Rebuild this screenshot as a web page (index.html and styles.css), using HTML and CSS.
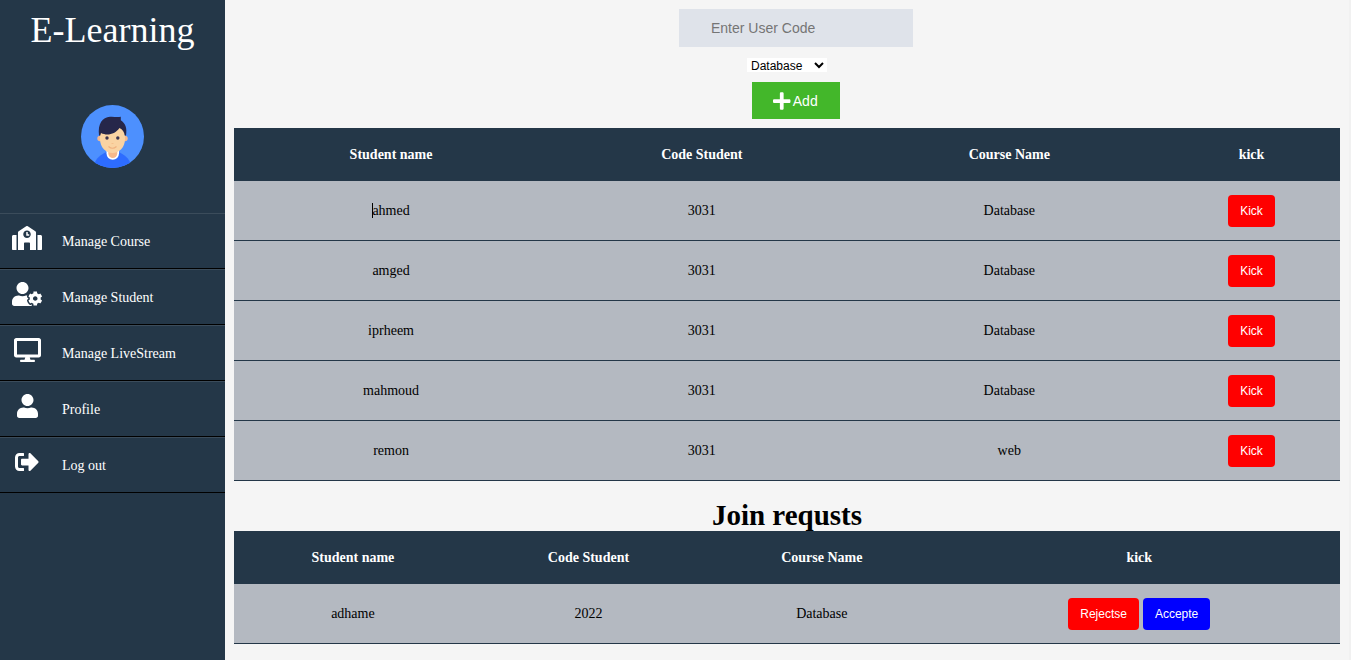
FILE: index.html
```html
<!DOCTYPE html>
<html lang="en">
<head>
<meta charset="utf-8">
<title>E-Learning</title>
<link rel="stylesheet" href="styles.css">
</head>
<body>
<aside class="sidebar">
  <h1 class="brand">E-Learning</h1>
  <svg class="avatar" viewBox="0 0 63 63" role="img" aria-label="User avatar">
    <defs><clipPath id="disc"><circle cx="31.5" cy="31.5" r="31.5"/></clipPath></defs>
    <g clip-path="url(#disc)">
      <rect width="63" height="63" fill="#4d90fe"/>
      <path d="M13 60C15 53 20 49 26 47H37C43 49 48 53 50 60V63H13Z" fill="#2d6cff"/>
      <path d="M25.500 46V48.500a6.250 6.250 0 0 0 12.500 0V46Z" fill="#fff"/>
      <path d="M27.300 43H36.300V48.500a4.500 4.500 0 0 1-9 0Z" fill="#f7b98b"/>
      <circle cx="19" cy="33.500" r="2.700" fill="#f7b98b"/>
      <circle cx="44" cy="33.500" r="2.700" fill="#f7b98b"/>
      <path d="M19 24C19 18 44 18 44 24V34C44 42.500 38 48 31.500 48S19 42.500 19 34Z" fill="#fad3a2"/>
      <path d="M18 30.500C16.500 18.500 21.500 12.300 29 11.800C33 11.500 36 12.500 39.800 11.700V15.200C44.500 18.500 46.300 23 45 30.500H43.700C43.300 27 41.500 24.500 38.500 23C34 29.500 26 31 20 28L19.300 30.500Z" fill="#26264a"/>
      <circle cx="26" cy="33" r="1.700" fill="#3b3350"/>
      <circle cx="36.800" cy="33" r="1.700" fill="#3b3350"/>
      <path d="M30.500 38.500H32.500" stroke="#f5c08c" stroke-width="1"/>
      <path d="M27.500 41.500Q31.500 45 35.500 41.500" fill="none" stroke="#efb07f" stroke-width="1.200"/>
    </g>
  </svg>
  <nav class="menu">
    <a class="menu-item" href="#"><span class="menu-icon"><svg class="icon" viewBox="0 0 640 512"><path d="M0 224v272c0 8.840 7.160 16 16 16h80V192H32c-17.670 0-32 14.330-32 32zm360-48h-24v-40c0-4.420-3.580-8-8-8h-16c-4.420 0-8 3.580-8 8v64c0 4.420 3.580 8 8 8h48c4.420 0 8-3.580 8-8v-16c0-4.420-3.580-8-8-8zm137.750-63.960l-160-106.670a32.020 32.020 0 0 0-35.500 0l-160 106.670A32.002 32.002 0 0 0 128 138.660V512h128V368c0-8.840 7.160-16 16-16h96c8.840 0 16 7.160 16 16v144h128V138.670c0-10.700-5.350-20.700-14.250-26.630zM320 256c-44.180 0-80-35.820-80-80s35.820-80 80-80 80 35.820 80 80-35.820 80-80 80zm288-64h-64v320h80c8.840 0 16-7.160 16-16V224c0-17.670-14.330-32-32-32z"/></svg></span>Manage Course</a>
    <a class="menu-item" href="#"><span class="menu-icon"><svg class="icon" viewBox="0 0 640 512"><path d="M610.5 373.3c2.6-14.1 2.6-28.5 0-42.6l25.8-14.9c3-1.7 4.3-5.2 3.3-8.5-6.700-21.600-18.200-41.200-33.200-57.400-2.300-2.500-6-3.100-9-1.400l-25.800 14.900c-10.900-9.300-23.400-16.500-36.900-21.300v-29.800c0-3.400-2.400-6.400-5.700-7.100-22.300-5-45-4.800-66.200 0-3.300.7-5.700 3.700-5.700 7.100v29.800c-13.500 4.800-26 12-36.900 21.300l-25.800-14.900c-2.900-1.700-6.700-1.100-9 1.400-15 16.200-26.500 35.800-33.200 57.400-1 3.300.4 6.800 3.300 8.500l25.800 14.900c-2.600 14.100-2.600 28.500 0 42.600l-25.800 14.900c-3 1.700-4.300 5.200-3.300 8.500 6.700 21.600 18.200 41.100 33.200 57.400 2.300 2.500 6 3.100 9 1.400l25.800-14.900c10.900 9.300 23.400 16.500 36.900 21.300v29.800c0 3.400 2.400 6.400 5.700 7.100 22.300 5 45 4.800 66.200 0 3.300-.7 5.700-3.700 5.700-7.100v-29.800c13.500-4.800 26-12 36.900-21.300l25.800 14.900c2.900 1.700 6.700 1.100 9-1.400 15-16.200 26.500-35.800 33.200-57.400 1-3.300-.4-6.800-3.300-8.500l-25.800-14.900zM496 400.500c-26.800 0-48.500-21.800-48.500-48.500s21.800-48.500 48.500-48.500 48.500 21.800 48.500 48.500-21.700 48.500-48.500 48.500zM224 256c70.700 0 128-57.300 128-128S294.700 0 224 0 96 57.300 96 128s57.300 128 128 128zm201.200 226.500c-2.300-1.200-4.600-2.600-6.800-3.900l-7.900 4.600c-6 3.400-12.800 5.300-19.600 5.300-10.900 0-21.400-4.600-28.900-12.600-18.300-19.800-32.300-43.900-40.200-69.600-5.500-17.700 1.900-36.400 17.900-45.700l7.900-4.600c-.1-2.600-.1-5.200 0-7.800l-7.900-4.600c-16-9.200-23.400-28-17.900-45.700.9-2.900 2.200-5.800 3.200-8.700-3.800-.3-7.500-1.200-11.400-1.200h-16.700c-22.200 10.200-46.900 16-72.900 16s-50.600-5.800-72.900-16h-16.700C60.200 288 0 348.200 0 422.400V464c0 26.500 21.500 48 48 48h352c10.100 0 19.500-3.200 27.200-8.500-1.200-3.800-2-7.700-2-11.800v-9.200z"/></svg></span>Manage Student</a>
    <a class="menu-item" href="#"><span class="menu-icon"><svg class="icon" viewBox="0 0 576 512"><path d="M528 0H48C21.500 0 0 21.500 0 48v320c0 26.500 21.500 48 48 48h192l-16 48h-72c-13.300 0-24 10.700-24 24s10.700 24 24 24h272c13.300 0 24-10.700 24-24s-10.700-24-24-24h-72l-16-48h192c26.500 0 48-21.500 48-48V48c0-26.500-21.500-48-48-48zm-16 352H64V64h448v288z"/></svg></span>Manage LiveStream</a>
    <a class="menu-item" href="#"><span class="menu-icon"><svg class="icon" viewBox="0 0 448 512"><path d="M224 256c70.700 0 128-57.300 128-128S294.700 0 224 0 96 57.300 96 128s57.300 128 128 128zm89.600 32h-16.700c-22.200 10.200-46.900 16-72.900 16s-50.600-5.800-72.900-16h-16.700C60.200 288 0 348.200 0 422.400V464c0 26.500 21.500 48 48 48h352c26.500 0 48-21.500 48-48v-41.600c0-74.200-60.200-134.400-134.400-134.400z"/></svg></span>Profile</a>
    <a class="menu-item" href="#"><span class="menu-icon"><svg class="icon" viewBox="0 0 512 512"><path d="M497 273L329 441c-15 15-41 4.500-41-17v-96H152c-13.300 0-24-10.700-24-24v-96c0-13.300 10.700-24 24-24h136V88c0-21.400 25.900-32 41-17l168 168c9.300 9.400 9.300 24.600 0 34zM192 436v-40c0-6.600-5.400-12-12-12H96c-17.700 0-32-14.300-32-32V160c0-17.700 14.300-32 32-32h84c6.600 0 12-5.400 12-12V76c0-6.600-5.400-12-12-12H96c-53 0-96 43-96 96v192c0 53 43 96 96 96h84c6.600 0 12-5.400 12-12z"/></svg></span>Log out</a>
  </nav>
</aside>
<main class="content">
  <form class="add-form">
    <input class="code-input" type="text" placeholder="Enter User Code" aria-label="User code">
    <select class="course-select" aria-label="Course"><option>Database</option><option>web</option></select>
    <button class="add-button" type="button"><svg class="plus" viewBox="0 0 448 512"><path d="M416 208H272V64c0-17.670-14.330-32-32-32h-32c-17.670 0-32 14.330-32 32v144H32c-17.670 0-32 14.330-32 32v32c0 17.670 14.330 32 32 32h144v144c0 17.670 14.330 32 32 32h32c17.670 0 32-14.330 32-32V304h144c17.670 0 32-14.330 32-32v-32c0-17.670-14.330-32-32-32z"/></svg>Add</button>
  </form>
  <table class="table students">
    <colgroup><col class="name"><col class="code"><col class="course"><col></colgroup>
    <thead><tr><th>Student name</th><th>Code Student</th><th>Course Name</th><th>kick</th></tr></thead>
    <tbody>
      <tr><td><span class="caret">ahmed</span></td><td>3031</td><td>Database</td><td><button class="btn" type="button">Kick</button></td></tr>
      <tr><td>amged</td><td>3031</td><td>Database</td><td><button class="btn" type="button">Kick</button></td></tr>
      <tr><td>iprheem</td><td>3031</td><td>Database</td><td><button class="btn" type="button">Kick</button></td></tr>
      <tr><td>mahmoud</td><td>3031</td><td>Database</td><td><button class="btn" type="button">Kick</button></td></tr>
      <tr><td>remon</td><td>3031</td><td>web</td><td><button class="btn" type="button">Kick</button></td></tr>
    </tbody>
  </table>
  <h2 class="title">Join requsts</h2>
  <table class="table requests">
    <colgroup><col class="name"><col class="code"><col class="course"><col></colgroup>
    <thead><tr><th>Student name</th><th>Code Student</th><th>Course Name</th><th>kick</th></tr></thead>
    <tbody>
      <tr><td>adhame</td><td>2022</td><td>Database</td><td><div class="actions"><button class="btn" type="button">Rejectse</button><button class="btn accept" type="button">Accepte</button></div></td></tr>
    </tbody>
  </table>
</main>
</body>
</html>
```

FILE: styles.css
```css
* {
  box-sizing: border-box;
}

body {
  margin: 0;
  min-height: 100vh;
  display: flex;
  background: #f5f5f5;
  font-family: "Liberation Serif", "Times New Roman", serif;
  font-size: 14px;
  color: #000;
}

.sidebar {
  flex: 0 0 225px;
  display: flex;
  flex-direction: column;
  background: #243748;
  color: #fff;
}

.brand {
  margin: 0;
  padding-top: 10px;
  font-size: 36px;
  font-weight: 400;
  line-height: 40px;
  text-align: center;
}

.avatar {
  width: 63px;
  height: 63px;
  margin: 55px auto 45px;
}

.menu-item {
  display: flex;
  align-items: center;
  height: 56px;
  padding: 2px 0 0 12px;
  gap: 20px;
  border-top: 1px solid #3b4c5b;
  border-bottom: 1px solid #000;
  color: #fff;
  text-decoration: none;
}

.menu-icon {
  display: flex;
  justify-content: center;
  width: 30px;
  padding-bottom: 9px;
}

.icon {
  height: 24px;
  fill: #fff;
}

.content {
  flex: 1;
  min-width: 0;
  padding: 9px 9px 16px 9px;
  border-right: 2px solid #f1f1f1;
}

.add-form {
  display: flex;
  flex-direction: column;
  align-items: center;
  padding-left: 18px;
  margin-bottom: 9px;
}

.code-input {
  width: 234px;
  height: 38px;
  padding: 0 32px;
  border: 0;
  background: #dfe3ea;
  font: 14px "Liberation Sans", Arial, sans-serif;
}

.code-input::placeholder {
  color: #757575;
}

.course-select {
  width: 80px;
  height: 14px;
  margin: 11px 18px 10px 0;
  padding: 0;
  border: 0;
  border-radius: 0;
  background: #fff;
  color: #000;
  font: 12px "Liberation Sans", Arial, sans-serif;
}

.add-button {
  display: flex;
  align-items: center;
  gap: 2px;
  height: 37px;
  padding: 0 22px 0 21px;
  border: 0;
  background: #43b72a;
  color: #fff;
  font: 14px "Liberation Sans", Arial, sans-serif;
}

.plus {
  height: 20px;
  fill: #fff;
}

.table {
  width: 100%;
  table-layout: fixed;
  border-collapse: separate;
  border-spacing: 0;
  text-align: center;
  background: #b4b9c1;
}

.table th {
  height: 53px;
  padding: 0;
  background: #243748;
  color: #fff;
}

.table td {
  height: 60px;
  padding: 0;
  border-bottom: 1px solid #243748;
}

.students .name {
  width: 28.4%;
}

.students .code,
.students .course {
  width: 27.8%;
}

.requests .name {
  width: 21.5%;
}

.requests .code,
.requests .course {
  width: 21.1%;
}

.caret {
  box-shadow: inset 1px 0 0 #000;
}

.btn {
  height: 32px;
  padding: 0 12px;
  border: 0;
  border-radius: 4px;
  background: #f00;
  color: #fff;
  font: 12px "Liberation Sans", Arial, sans-serif;
}

.accept {
  background: #00f;
}

.actions {
  display: flex;
  justify-content: center;
  gap: 4px;
}

.title {
  margin: 18px 0 0;
  font-size: 29px;
  line-height: 32px;
  text-align: center;
}
```
